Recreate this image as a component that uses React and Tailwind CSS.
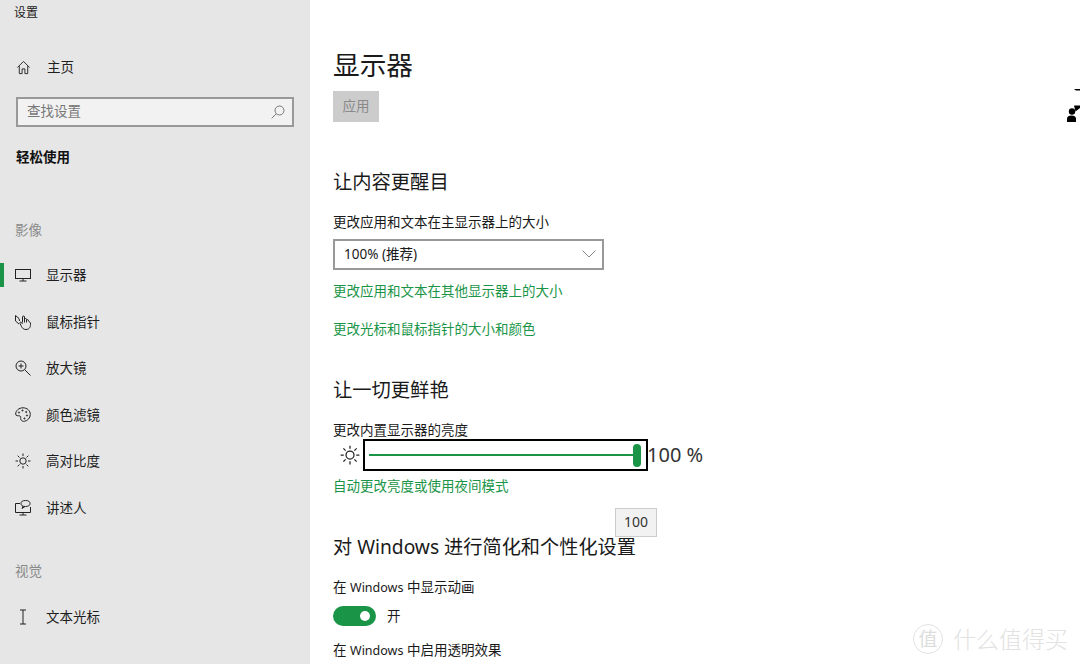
import React from 'react';

const FONT = 'font-["Noto_Sans","Noto_Sans_CJK_SC",sans-serif]';

const icons = {
  home: (
    <path d="M1.5 8 8 1.5 14.5 8M3.5 6.5V14.5H6.5V9.5H9.5V14.5H12.5V6.5" />
  ),
  display: (
    <>
      <rect x="0.5" y="2.5" width="15" height="9" />
      <path d="M8 11.5V14M4.5 14H11.5" />
    </>
  ),
  pointer: (
    <>
      <path d="M7.500 8.500V3a1 1 0 0 1 2 0V8.500M9.500 5.500a1 1 0 0 1 2 0V8.500M11.500 6.500a1 1 0 0 1 2 .3L15.500 9c.3 3.500-.8 6.500-4.500 6.500-2.500 0-3.500-1.200-4.500-3L5 9.500a.9.9 0 0 1 1.500-1L7.500 10" />
      <path d="M.5 1.500V7L4 10M.5 1.500 4 4.500 4.500 7" />
    </>
  ),
  zoom: (
    <>
      <circle cx="6" cy="6" r="5" />
      <path d="M3.500 6H8.500M6 3.500V8.500M9.700 9.700 15.500 15.500" />
    </>
  ),
  palette: (
    <>
      <path d="M8 .8C3.800.8.700 3.700.700 7c0 2.600 2.700 1.300 4.300 2 1.500.7.100 2.300 1 3.800.8 1.400 2.200 1.700 3.500 1.500 3-.5 5.800-3.300 5.800-6.800C15.300 3.700 12.200.8 8 .8Z" />
      <circle cx="4" cy="5.500" r=".6" />
      <circle cx="7.500" cy="3.500" r=".6" />
      <circle cx="11.200" cy="5" r=".6" />
      <circle cx="12" cy="8.500" r=".6" />
      <circle cx="9.500" cy="11.500" r=".6" />
    </>
  ),
  sun: (
    <>
      <circle cx="8" cy="8" r="3.200" />
      <path d="M8 .5V3M8 13V15.500M.5 8H3M13 8H15.500M2.700 2.700 4.500 4.500M11.500 11.500 13.300 13.300M2.700 13.300 4.500 11.500M11.500 4.500 13.300 2.700" />
    </>
  ),
  narrator: (
    <>
      <path d="M5 3.500H.5V12.500H15.500V7" />
      <path d="M8 12.500V15M4.500 15H11.500" />
      <ellipse cx="10.500" cy="3.500" rx="4.500" ry="3" />
      <path d="M8 6 7 8.500 10 6.500" />
    </>
  ),
  cursor: <path d="M5 1H11M5 15H11M8 1V15" />,
};

function Icon({ name, className = 'h-4 w-4' }) {
  return (
    <svg viewBox="0 0 16 16" fill="none" stroke="currentColor" strokeWidth="1" className={`shrink-0 text-[#222222] ${className}`}>
      {icons[name]}
    </svg>
  );
}

function NavItem({ icon, label, active }) {
  return (
    <div className="relative flex h-[46.5px] items-center gap-[15px] pl-[15px] text-[13.5px] leading-5 text-[#1f1f1f]">
      {active && <div className="absolute top-[11px] left-0 h-6 w-1 bg-[#1a9548]" />}
      <Icon name={icon} />
      <span>{label}</span>
    </div>
  );
}

function Sidebar() {
  return (
    <aside className="h-full w-[310px] shrink-0 bg-[#e6e6e6]">
      <div className="flex h-6 items-center pt-[2px] pl-[14px] text-xs leading-5 text-[#222222]">设置</div>
      <div className="mt-5 flex h-[46px] items-center gap-4 pl-[16px] text-[13.5px] leading-5 text-[#1f1f1f]">
        <Icon name="home" className="h-[15px] w-[15px]" />
        <span>主页</span>
      </div>
      <div className="mx-4 mt-[7px] flex h-[30px] items-center justify-between border-2 border-[#999999] bg-[#f2f2f2] pr-[7px] pb-[2px] pl-[9px] text-[13.5px] leading-5 text-[#777777]">
        <span>查找设置</span>
        <svg viewBox="0 0 14 14" fill="none" stroke="#777777" strokeWidth="1" className="mt-[2px] h-[14px] w-[14px]">
          <circle cx="8.500" cy="5.500" r="4.500" />
          <path d="M5.300 8.700 .7 13.300" />
        </svg>
      </div>
      <div className="mt-[15px] flex h-[30px] items-center pl-4 text-[13.5px] leading-5 font-bold text-[#111111]">轻松使用</div>
      <div className="mt-12 flex h-5 items-center pl-[15px] text-[13.5px] leading-5 text-[#8a8a8a]">影像</div>
      <nav className="mt-3">
        <NavItem icon="display" label="显示器" active />
        <NavItem icon="pointer" label="鼠标指针" />
        <NavItem icon="zoom" label="放大镜" />
        <NavItem icon="palette" label="颜色滤镜" />
        <NavItem icon="sun" label="高对比度" />
        <NavItem icon="narrator" label="讲述人" />
      </nav>
      <div className="mt-[30px] flex h-5 items-center pl-[15px] text-[13.5px] leading-5 text-[#8a8a8a]">视觉</div>
      <div className="mt-[13px]">
        <NavItem icon="cursor" label="文本光标" />
      </div>
    </aside>
  );
}

function Main() {
  return (
    <main className="relative h-full min-w-0 flex-1 overflow-hidden bg-white pl-[23px] text-[#1a1a1a]">
      <h1 className="mt-[45px] h-10 text-[26.7px] leading-10 font-normal">显示器</h1>
      <button className="mt-[6px] block h-[31px] w-[46px] bg-[#cccccc] pb-[2px] text-[13.5px] leading-5 text-[#8a8a8a]">应用</button>

      <h2 className="mt-[46px] h-7 text-[19.3px] leading-7 font-normal">让内容更醒目</h2>
      <p className="mt-[16px] h-5 text-[13.5px] leading-5">更改应用和文本在主显示器上的大小</p>
      <div className="mt-[7px] flex h-[31px] w-[271px] items-center justify-between border-2 border-[#999999] pr-[6px] pb-px pl-[9px] text-[13.5px] leading-5">
        <span>100% (推荐)</span>
        <svg viewBox="0 0 14 8" fill="none" stroke="#888888" strokeWidth="1" className="h-2 w-[14px]">
          <path d="M.5.5 7 7 13.500.5" />
        </svg>
      </div>
      <a className="mt-[11px] block h-5 text-[13.5px] leading-5 text-[#1a9548]">更改应用和文本在其他显示器上的大小</a>
      <a className="mt-[18px] block h-5 text-[13.5px] leading-5 text-[#1a9548]">更改光标和鼠标指针的大小和颜色</a>

      <h2 className="mt-[37px] h-7 text-[19.3px] leading-7 font-normal">让一切更鲜艳</h2>
      <p className="mt-[16px] h-5 text-[13.5px] leading-5">更改内置显示器的亮度</p>
      <div className="-mt-[1px] flex h-[32px] items-center">
        <Icon name="sun" className="ml-[7px] h-5 w-5" />
        <div className="ml-[3px] flex h-[32px] w-[285px] items-center border-2 border-black pr-[5px] pl-[4px]">
          <div className="h-0.5 flex-1 bg-[#1a9548]" />
          <div className="h-[23px] w-2 rounded-full bg-[#1a9548]" />
        </div>
        <span className="-ml-px text-xl leading-7 text-[#333333]">100 %</span>
      </div>
      <a className="mt-[5px] block h-5 text-[13.5px] leading-5 text-[#1a9548]">自动更改亮度或使用夜间模式</a>

      <h2 className="mt-[37px] h-7 text-[19.2px] leading-7 font-normal">对 Windows 进行简化和个性化设置</h2>
      <p className="mt-[16px] h-5 text-[13.5px] leading-5">在 <span className="text-[12.5px]">Windows</span> 中显示动画</p>
      <div className="mt-[9px] flex h-5 items-center gap-[11px] text-[13.5px] leading-5">
        <div className="flex h-5 w-[43px] items-center justify-end rounded-full bg-[#1a9548] pr-[6px]">
          <div className="h-[10px] w-[10px] rounded-full bg-white" />
        </div>
        <span>开</span>
      </div>
      <p className="mt-[14px] h-5 text-[13.5px] leading-5">在 <span className="text-[12.5px]">Windows</span> 中启用透明效果</p>

      <div className="absolute top-[508px] left-[305px] flex h-[29px] w-[42px] items-center justify-center border border-[#cccccc] bg-[#f2f2f2] pb-[2px] text-sm leading-5 text-[#333333]">100</div>

      <svg viewBox="0 0 14 38" className="absolute top-[88px] left-[756px] h-[38px] w-[14px]" fill="#000000">
        <path d="M8 1H14V2.500H10Z" />
        <path d="M8 17.500H14V20L9.500 23.500Z" />
        <circle cx="6" cy="23.500" r="3.200" />
        <path d="M1 34V30.500c0-2 2-3 4.500-3S10 28.500 10 30.500V34Z" />
      </svg>

      <div className="absolute top-[624px] left-[603px] flex h-[30px] w-[30px] items-center justify-center rounded-full border border-[#e2e2e2] text-[19px] leading-6 text-[#dddddd]">值</div>
      <div className="absolute top-[624px] left-[643px] text-[23px] leading-[30px] font-light whitespace-nowrap text-[#e2e2e2]">什么值得买</div>
    </main>
  );
}

export default function App() {
  return (
    <div className={`flex h-[664px] w-[1080px] overflow-hidden ${FONT}`}>
      <Sidebar />
      <Main />
    </div>
  );
}
